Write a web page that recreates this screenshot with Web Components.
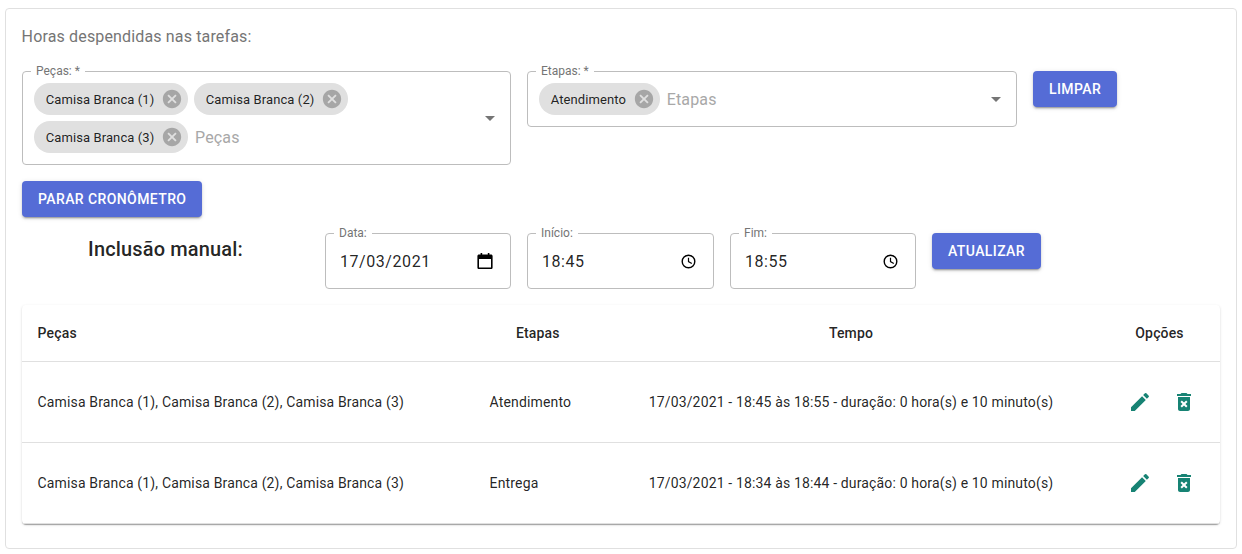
<!DOCTYPE html>
<html lang="pt-BR">
<head>
<meta charset="utf-8">
<title>Horas despendidas</title>
<style>
    body { margin: 8px 5px 6px; background: #fff; color: rgba(0,0,0,.87); font-family: Roboto, "Liberation Sans", sans-serif; }
</style>
</head>
<body>
<hours-panel>
    <span slot="title">Horas despendidas nas tarefas:</span>
    <tag-select slot="pieces" label="Peças: *" placeholder="Peças">
        <tag-chip>Camisa Branca (1)</tag-chip>
        <tag-chip>Camisa Branca (2)</tag-chip>
        <tag-chip>Camisa Branca (3)</tag-chip>
    </tag-select>
    <tag-select slot="steps" label="Etapas: *" placeholder="Etapas">
        <tag-chip>Atendimento</tag-chip>
    </tag-select>
    <raised-button slot="clear">Limpar</raised-button>
    <raised-button slot="timer">Parar cronômetro</raised-button>
    <span slot="manual">Inclusão manual:</span>
    <value-field slot="date" label="Data:" value="17/03/2021" icon="calendar"></value-field>
    <value-field slot="start" label="Início:" value="18:45" icon="clock"></value-field>
    <value-field slot="end" label="Fim:" value="18:55" icon="clock"></value-field>
    <raised-button slot="update">Atualizar</raised-button>
    <hours-table slot="table">
        <hours-row header>
            <span>Peças</span>
            <span slot="step">Etapas</span>
            <span slot="time">Tempo</span>
            <span slot="options">Opções</span>
        </hours-row>
        <hours-row>
            <span>Camisa Branca (1), Camisa Branca (2), Camisa Branca (3)</span>
            <span slot="step">Atendimento</span>
            <span slot="time">17/03/2021 - 18:45 às 18:55 - duração: 0 hora(s) e 10 minuto(s)</span>
            <row-actions slot="options"></row-actions>
        </hours-row>
        <hours-row>
            <span>Camisa Branca (1), Camisa Branca (2), Camisa Branca (3)</span>
            <span slot="step">Entrega</span>
            <span slot="time">17/03/2021 - 18:34 às 18:44 - duração: 0 hora(s) e 10 minuto(s)</span>
            <row-actions slot="options"></row-actions>
        </hours-row>
    </hours-table>
</hours-panel>

<script>
class HoursPanel extends HTMLElement {
    constructor(){
        super();
        this.attachShadow({ mode: 'open' });
        this.shadowRoot.innerHTML = `
            <style>
                :host {
                    display: block;
                    box-sizing: border-box;
                    border: 1px solid #e0e0e0;
                    border-radius: 4px;
                    padding: 17px 16px 24px;
                }
                #title {
                    font-size: 16px;
                    line-height: 22px;
                    letter-spacing: .00938em;
                    color: #757575;
                    margin: 0 0 23px -.4px;
                }
                #selects {
                    display: grid;
                    grid-template-columns: 489px 490px auto;
                    column-gap: 16px;
                    justify-content: start;
                    align-items: start;
                }
                #timer { display: flex; margin-top: 16px; }
                #manual {
                    display: grid;
                    grid-template-columns: 287px 186px 187px 186px auto;
                    column-gap: 16px;
                    justify-content: start;
                    align-items: start;
                    margin-top: 16px;
                }
                #manual-title {
                    font-size: 20px;
                    font-weight: 500;
                    line-height: 32px;
                    letter-spacing: .0075em;
                    text-align: center;
                }
                #table { margin-top: 16px; }
            </style>
            <div id="title"><slot name="title"></slot></div>
            <div id="selects">
                <slot name="pieces"></slot>
                <slot name="steps"></slot>
                <slot name="clear"></slot>
            </div>
            <div id="timer"><slot name="timer"></slot></div>
            <div id="manual">
                <div id="manual-title"><slot name="manual"></slot></div>
                <slot name="date"></slot>
                <slot name="start"></slot>
                <slot name="end"></slot>
                <slot name="update"></slot>
            </div>
            <div id="table"><slot name="table"></slot></div>
        `;
    }
}
window.customElements.define('hours-panel', HoursPanel);

class TagSelect extends HTMLElement {
    constructor(){
        super();
        this.attachShadow({ mode: 'open' });
        this.shadowRoot.innerHTML = `
            <style>
                :host {
                    display: block;
                    position: relative;
                    box-sizing: border-box;
                    border: 1px solid #bdbdbd;
                    border-radius: 4px;
                    padding: 8px 39px 8px 8px;
                }
                #items { display: flex; flex-wrap: wrap; align-items: center; }
                #placeholder {
                    flex: 1;
                    min-width: 30px;
                    padding-left: 4px;
                    font-size: 16px;
                    letter-spacing: .00938em;
                    color: #a8a8a8;
                    white-space: nowrap;
                }
                #label {
                    position: absolute;
                    left: 8px;
                    top: -8px;
                    padding: 0 5px;
                    background: #fff;
                    font-size: 12px;
                    line-height: 14px;
                    color: #757575;
                }
                svg {
                    position: absolute;
                    right: 8px;
                    top: 50%;
                    width: 24px;
                    height: 24px;
                    margin-top: -12px;
                    fill: #757575;
                }
            </style>
            <span id="label"></span>
            <div id="items">
                <slot></slot>
                <span id="placeholder"></span>
            </div>
            <svg viewBox="0 0 24 24"><path d="M7 10l5 5 5-5z"/></svg>
        `;
    }
    connectedCallback(){
        this.shadowRoot.getElementById('label').textContent = this.getAttribute('label');
        this.shadowRoot.getElementById('placeholder').textContent = this.getAttribute('placeholder');
    }
}
window.customElements.define('tag-select', TagSelect);

class TagChip extends HTMLElement {
    constructor(){
        super();
        this.attachShadow({ mode: 'open' });
        this.shadowRoot.innerHTML = `
            <style>
                :host {
                    display: inline-flex;
                    align-items: center;
                    height: 32px;
                    margin: 3px;
                    padding-left: 11.7px;
                    border-radius: 16px;
                    background: #e0e0e0;
                    font-size: 13px;
                    letter-spacing: .1px;
                    color: rgba(0,0,0,.87);
                    white-space: nowrap;
                }
                svg {
                    width: 22px;
                    height: 22px;
                    margin: 0 5px 0 6.7px;
                    fill: rgba(0,0,0,.26);
                }
            </style>
            <slot></slot>
            <svg viewBox="0 0 24 24"><path d="M12 2C6.47 2 2 6.47 2 12s4.47 10 10 10 10-4.47 10-10S17.530 2 12 2zm5 13.590L15.590 17 12 13.410 8.410 17 7 15.590 10.590 12 7 8.410 8.410 7 12 10.590 15.590 7 17 8.410 13.410 12 17 15.590z"/></svg>
        `;
    }
}
window.customElements.define('tag-chip', TagChip);

class RaisedButton extends HTMLElement {
    constructor(){
        super();
        this.attachShadow({ mode: 'open' });
        this.shadowRoot.innerHTML = `
            <style>
                :host {
                    display: inline-block;
                    justify-self: start;
                    box-sizing: border-box;
                    height: 36px;
                    padding: 0 16px;
                    border-radius: 4px;
                    background: #556cd6;
                    color: #fff;
                    font-size: 14px;
                    font-weight: 500;
                    line-height: 36px;
                    letter-spacing: .02857em;
                    text-transform: uppercase;
                    white-space: nowrap;
                    box-shadow: 0 3px 1px -2px rgba(0,0,0,.2), 0 2px 2px 0 rgba(0,0,0,.14), 0 1px 5px 0 rgba(0,0,0,.12);
                }
            </style>
            <slot></slot>
        `;
    }
}
window.customElements.define('raised-button', RaisedButton);

class ValueField extends HTMLElement {
    constructor(){
        super();
        this.attachShadow({ mode: 'open' });
        this.shadowRoot.innerHTML = `
            <style>
                :host {
                    display: flex;
                    align-items: center;
                    justify-content: space-between;
                    position: relative;
                    box-sizing: border-box;
                    height: 56px;
                    border: 1px solid #bdbdbd;
                    border-radius: 4px;
                    padding: 0 17px 0 14px;
                }
                #label {
                    position: absolute;
                    left: 8px;
                    top: -8px;
                    padding: 0 5px;
                    background: #fff;
                    font-size: 12px;
                    line-height: 14px;
                    color: #757575;
                }
                #value { font-size: 16px; letter-spacing: .035em; }
                svg { flex: none; width: 20px; height: 20px; margin-right: -2px; fill: #000; }
            </style>
            <span id="label"></span>
            <span id="value"></span>
            <svg viewBox="0 0 20 20"></svg>
        `;
    }
    connectedCallback(){
        this.shadowRoot.getElementById('label').textContent = this.getAttribute('label');
        this.shadowRoot.getElementById('value').textContent = this.getAttribute('value');
        const icons = {
            calendar: '<path d="M4 3.500h1.600V2H7.200v1.500h5.600V2h1.600v1.500H16c.9 0 1.600.7 1.600 1.600v11.300c0 .9-.7 1.600-1.600 1.600H4c-.9 0-1.600-.7-1.600-1.600V5.100c0-.9.7-1.600 1.600-1.600zM4 8v8.400h12V8z"/>',
            clock: '<g transform="translate(.5 .5)"><path fill-rule="evenodd" d="M10 3a7 7 0 1 0 0 14 7 7 0 0 0 0-14zm0 1.400a5.600 5.600 0 1 1 0 11.200 5.600 5.600 0 0 1 0-11.200z"/><path d="M9.400 6.300h1.200v3.500l3 1.800-.6 1-3.600-2.200z"/></g>'
        };
        this.shadowRoot.querySelector('svg').innerHTML = icons[this.getAttribute('icon')];
    }
}
window.customElements.define('value-field', ValueField);

class HoursTable extends HTMLElement {
    constructor(){
        super();
        this.attachShadow({ mode: 'open' });
        this.shadowRoot.innerHTML = `
            <style>
                :host {
                    display: block;
                    border-radius: 4px;
                    background: #fff;
                    box-shadow: 0 2px 1px -1px rgba(0,0,0,.2), 0 1px 1px 0 rgba(0,0,0,.14), 0 1px 3px 0 rgba(0,0,0,.12);
                }
            </style>
            <slot></slot>
        `;
    }
}
window.customElements.define('hours-table', HoursTable);

class HoursRow extends HTMLElement {
    constructor(){
        super();
        this.attachShadow({ mode: 'open' });
        this.shadowRoot.innerHTML = `
            <style>
                :host {
                    display: grid;
                    grid-template-columns: 452px 128px 498px 120px;
                    align-items: center;
                    box-sizing: border-box;
                    height: 81px;
                    border-bottom: 1px solid #e0e0e0;
                    font-size: 14px;
                    letter-spacing: .01071em;
                    color: rgba(0,0,0,.87);
                }
                :host([header]) { height: 57px; font-weight: 500; }
                :host([header]) #step { text-align: center; }
                :host([header]) #options { margin-left: -1px; }
                #first { padding-left: 15.6px; }
                #step { padding: 0 16px 0 15.6px; }
                #time { text-align: center; }
                #options { text-align: center; }
            </style>
            <div id="first"><slot></slot></div>
            <div id="step"><slot name="step"></slot></div>
            <div id="time"><slot name="time"></slot></div>
            <div id="options"><slot name="options"></slot></div>
        `;
    }
}
window.customElements.define('hours-row', HoursRow);

class RowActions extends HTMLElement {
    constructor(){
        super();
        this.attachShadow({ mode: 'open' });
        this.shadowRoot.innerHTML = `
            <style>
                :host { display: flex; justify-content: center; gap: 20px; padding-left: 4px; }
                svg { width: 24px; height: 24px; fill: #178374; }
            </style>
            <svg viewBox="0 0 24 24"><path d="M3 17.250V21h3.750L17.810 9.940l-3.750-3.750L3 17.250zM20.710 7.040c.39-.39.39-1.020 0-1.410l-2.340-2.340a.9959.9959 0 0 0-1.410 0l-1.830 1.830 3.750 3.750 1.830-1.830z"/></svg>
            <svg viewBox="0 0 24 24"><path d="M6 19c0 1.100.9 2 2 2h8c1.100 0 2-.9 2-2V7H6v12zm2.460-7.120l1.410-1.410L12 12.590l2.120-2.120 1.410 1.410L13.410 14l2.120 2.120-1.410 1.410L12 15.410l-2.120 2.120-1.410-1.410L10.590 14l-2.130-2.120zM15.500 4l-1-1h-5l-1 1H5v2h14V4z"/></svg>
        `;
    }
}
window.customElements.define('row-actions', RowActions);
</script>
</body>
</html>
